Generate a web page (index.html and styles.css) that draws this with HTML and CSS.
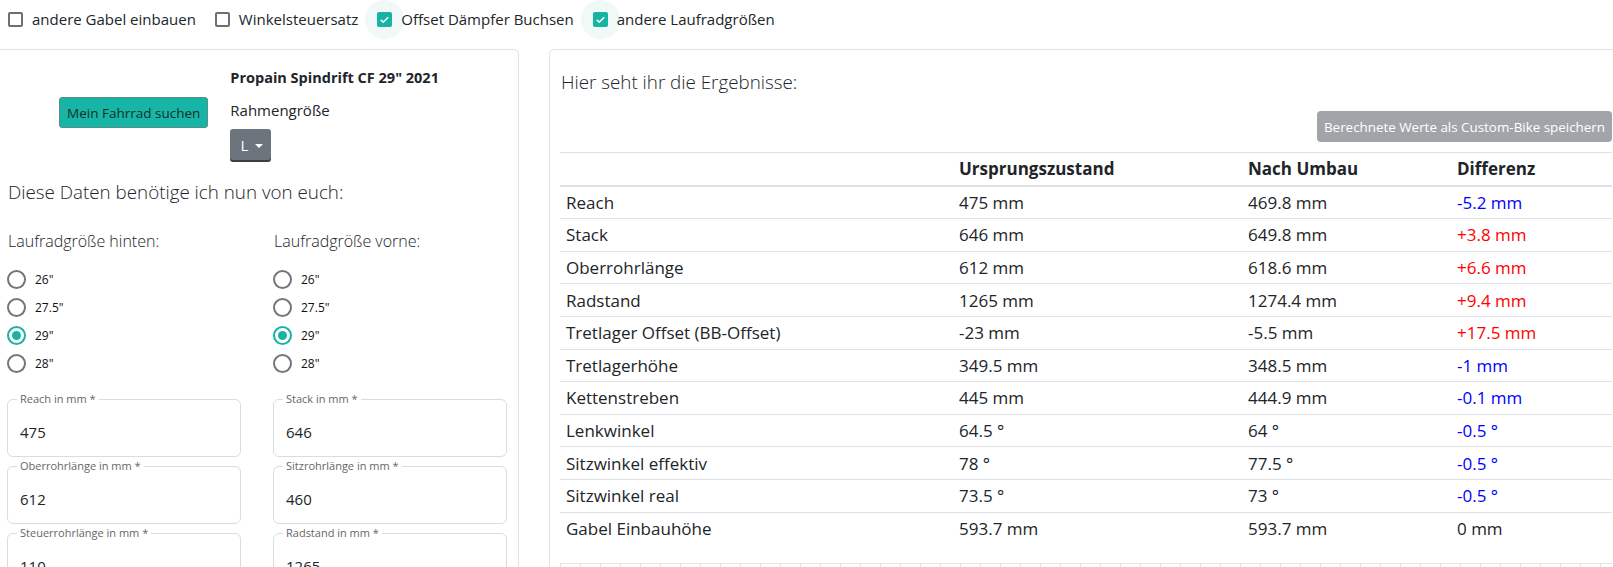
FILE: index.html
```html
<!DOCTYPE html>
<html lang="de">
<head>
  <meta charset="UTF-8" />
  <title>Geometrie-Rechner</title>
  <link rel="stylesheet" href="styles.css">
</head>
<body>

  <div class="toolbar">
    <label class="check"><span class="box"></span>andere Gabel einbauen</label>
    <label class="check"><span class="box"></span>Winkelsteuersatz</label>
    <label class="check on"><span class="box"><svg viewBox="0 0 16 16"><path d="M4 8.3l2.6 2.6L12 5.5" /></svg></span>Offset Dämpfer Buchsen</label>
    <label class="check on"><span class="box"><svg viewBox="0 0 16 16"><path d="M4 8.3l2.6 2.6L12 5.5" /></svg></span>andere Laufradgrößen</label>
  </div>

  <div class="main">

    <div class="card left-card">
      <div class="bike-row">
        <button class="btn-search">Mein Fahrrad suchen</button>
        <div class="bike-info">
          <div class="bike-name">Propain Spindrift CF 29" 2021</div>
          <div class="frame-label">Rahmengröße</div>
          <button class="btn-size">L <span class="caret"></span></button>
        </div>
      </div>

      <div class="lead">Diese Daten benötige ich nun von euch:</div>

      <div class="cols">
        <div>
          <div class="sub">Laufradgröße hinten:</div>
          <div class="radio"><span class="dot"></span>26"</div>
          <div class="radio"><span class="dot"></span>27.5"</div>
          <div class="radio on"><span class="dot"></span>29"</div>
          <div class="radio"><span class="dot"></span>28"</div>
        </div>
        <div>
          <div class="sub">Laufradgröße vorne:</div>
          <div class="radio"><span class="dot"></span>26"</div>
          <div class="radio"><span class="dot"></span>27.5"</div>
          <div class="radio on"><span class="dot"></span>29"</div>
          <div class="radio"><span class="dot"></span>28"</div>
        </div>
      </div>

      <div class="fields">
        <fieldset class="field"><legend>Reach in mm *</legend><div class="value">475</div></fieldset>
        <fieldset class="field"><legend>Stack in mm *</legend><div class="value">646</div></fieldset>
        <fieldset class="field"><legend>Oberrohrlänge in mm *</legend><div class="value">612</div></fieldset>
        <fieldset class="field"><legend>Sitzrohrlänge in mm *</legend><div class="value">460</div></fieldset>
        <fieldset class="field"><legend>Steuerrohrlänge in mm *</legend><div class="value">110</div></fieldset>
        <fieldset class="field"><legend>Radstand in mm *</legend><div class="value">1265</div></fieldset>
      </div>
    </div>

    <div class="card right-card">
      <div class="lead">Hier seht ihr die Ergebnisse:</div>
      <div class="save-row">
        <button class="btn-save" disabled>Berechnete Werte als Custom-Bike speichern</button>
      </div>

      <table class="results">
        <thead>
          <tr><th></th><th>Ursprungszustand</th><th>Nach Umbau</th><th>Differenz</th></tr>
        </thead>
        <tbody>
          <tr><td>Reach</td><td>475 mm</td><td>469.8 mm</td><td class="neg">-5.2 mm</td></tr>
          <tr><td>Stack</td><td>646 mm</td><td>649.8 mm</td><td class="pos">+3.8 mm</td></tr>
          <tr><td>Oberrohrlänge</td><td>612 mm</td><td>618.6 mm</td><td class="pos">+6.6 mm</td></tr>
          <tr><td>Radstand</td><td>1265 mm</td><td>1274.4 mm</td><td class="pos">+9.4 mm</td></tr>
          <tr><td>Tretlager Offset (BB-Offset)</td><td>-23 mm</td><td>-5.5 mm</td><td class="pos">+17.5 mm</td></tr>
          <tr><td>Tretlagerhöhe</td><td>349.5 mm</td><td>348.5 mm</td><td class="neg">-1 mm</td></tr>
          <tr><td>Kettenstreben</td><td>445 mm</td><td>444.9 mm</td><td class="neg">-0.1 mm</td></tr>
          <tr><td>Lenkwinkel</td><td>64.5 °</td><td>64 °</td><td class="neg">-0.5 °</td></tr>
          <tr><td>Sitzwinkel effektiv</td><td>78 °</td><td>77.5 °</td><td class="neg">-0.5 °</td></tr>
          <tr><td>Sitzwinkel real</td><td>73.5 °</td><td>73 °</td><td class="neg">-0.5 °</td></tr>
          <tr><td>Gabel Einbauhöhe</td><td>593.7 mm</td><td>593.7 mm</td><td>0 mm</td></tr>
        </tbody>
      </table>

      <div class="chart-axis"></div>
    </div>

  </div>

</body>
</html>
```

FILE: styles.css
```css
html, body {
  margin: 0;
  overflow: hidden;
}

body {
  background-color: #fff;
  font-family: 'Open Sans', 'Noto Sans', sans-serif;
  color: #212529;
  font-size: 15px;
}

button {
  font-family: inherit;
}

/* top options */

.toolbar {
  display: flex;
  align-items: center;
  height: 38px;
  padding-left: 8px;
  gap: 19px;
}

.check {
  display: flex;
  align-items: center;
  gap: 9px;
  font-size: 15px;
  position: relative;
}

.check .box {
  width: 15px;
  height: 15px;
  box-sizing: border-box;
  border: 2px solid #6f6f6f;
  border-radius: 2px;
  position: relative;
  flex: none;
}

.check.on .box {
  border: none;
  background-color: #17b3a3;
}

.check.on .box::before {
  content: '';
  position: absolute;
  left: -12px;
  top: -12px;
  width: 39px;
  height: 39px;
  border-radius: 50%;
  background-color: #f1f9f8;
  z-index: -1;
}

.check .box svg {
  width: 15px;
  height: 15px;
  display: block;
}

.check .box path {
  fill: none;
  stroke: #fff;
  stroke-width: 1.6;
}

/* cards */

.main {
  display: flex;
  gap: 30px;
  margin-top: 11px;
  margin-left: -12px;
}

.card {
  border: 1px solid #dfe2e6;
  border-radius: 5px;
  height: 560px;
  flex: none;
  box-sizing: border-box;
}

.left-card {
  width: 531px;
  padding: 18px 0 0 18px;
}

.right-card {
  width: 1074px;
  padding: 18px 10px 0 10px;
}

.bike-row {
  display: flex;
  align-items: center;
}

.btn-search {
  margin-left: 52px;
  margin-right: 22px;
  margin-top: -3px;
  height: 31px;
  padding: 0 7px;
  background-color: #17b5a5;
  border: 1px solid #5c8c86;
  border-radius: 3px;
  color: #10302c;
  font-size: 13.5px;
}

.bike-name {
  font-weight: 700;
  font-size: 14.5px;
  line-height: 20px;
}

.frame-label {
  margin-top: 11px;
  line-height: 22px;
}

.btn-size {
  margin-top: 8px;
  height: 31px;
  width: 41px;
  background-color: #6c757d;
  color: #fff;
  border: none;
  border-radius: 3px;
  box-shadow: 0 2px 0 #3a3f44;
  font-size: 15px;
  padding: 0 0 0 2px;
}

.caret {
  display: inline-block;
  vertical-align: middle;
  margin-left: 3px;
  border-top: 4px solid #fff;
  border-left: 4px solid transparent;
  border-right: 4px solid transparent;
}

.lead {
  font-size: 18.8px;
  font-weight: 300;
  line-height: 28px;
  margin-left: 1px;
}

.left-card .lead {
  margin-top: 18px;
}

/* wheel size radios */

.cols {
  display: grid;
  grid-template-columns: 234px 234px;
  column-gap: 32px;
  margin-top: 23px;
}

.sub {
  font-size: 16px;
  font-weight: 300;
  line-height: 24px;
  margin-left: 1px;
  margin-bottom: 12px;
}

.radio {
  display: flex;
  align-items: center;
  gap: 9px;
  height: 28px;
  font-size: 12px;
  color: #111;
}

.radio .dot {
  width: 19px;
  height: 19px;
  box-sizing: border-box;
  border: 2px solid #757575;
  border-radius: 50%;
  position: relative;
}

.radio.on .dot {
  border-color: #17b3a3;
}

.radio.on .dot::after {
  content: '';
  position: absolute;
  left: 3px;
  top: 3px;
  width: 9px;
  height: 9px;
  border-radius: 50%;
  background-color: #17b3a3;
}

/* outlined inputs */

.fields {
  display: grid;
  grid-template-columns: 234px 234px;
  column-gap: 32px;
  row-gap: 2px;
  margin-top: 15px;
}

.field {
  margin: 0;
  padding: 0 12px;
  height: 65px;
  box-sizing: border-box;
  border: 1px solid #dcdcdc;
  border-radius: 6px;
}

.field legend {
  font-size: 11px;
  color: #666;
  padding: 0 3px;
  margin-left: -3px;
  line-height: 14px;
}

.field .value {
  font-size: 15px;
  margin-top: 16px;
}

/* results */

.save-row {
  display: flex;
  justify-content: flex-end;
  margin-top: 15px;
}

.btn-save {
  height: 31px;
  padding: 0 7px;
  background-color: #a1a5a9;
  color: #fff;
  border: none;
  border-radius: 4px;
  font-size: 13.4px;
}

.results {
  width: 100%;
  border-collapse: collapse;
  margin-top: 10px;
  font-size: 17px;
  table-layout: fixed;
}

.results th,
.results td {
  text-align: left;
  padding: 0 6px;
  height: 31.6px;
  border-top: 1px solid #dee2e6;
  white-space: nowrap;
}

.results th {
  font-weight: 700;
  border-bottom: 2px solid #dee2e6;
}

.results th:nth-child(1) { width: 381px; }
.results th:nth-child(2) { width: 277px; }
.results th:nth-child(3) { width: 197px; }

.results tbody tr:last-child td {
  border-bottom: none;
}

.results tbody tr:first-child td {
  border-top: none;
}

.neg { color: #0000ff; }
.pos { color: #ff0000; }

.chart-axis {
  margin-top: 19px;
  height: 3px;
  border-top: 1px solid #e3e3e3;
  background: repeating-linear-gradient(90deg, #e3e3e3 0 1px, transparent 1px 20px);
}
```
